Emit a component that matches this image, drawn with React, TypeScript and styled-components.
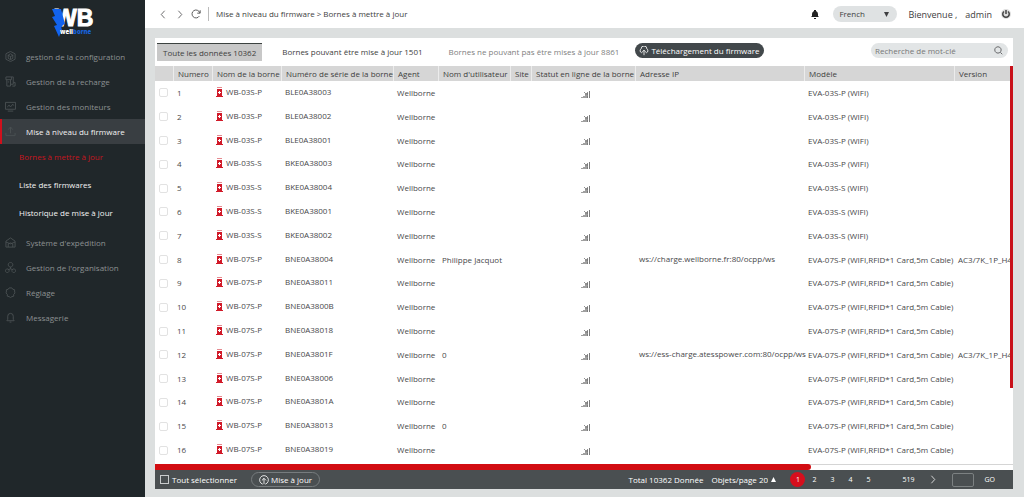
import React from "react";
import styled, { createGlobalStyle } from "styled-components";

const GlobalStyle = createGlobalStyle`
  * { box-sizing: border-box; }
  body { margin: 0; background: #dcdfdf; }
  body, button, input, select {
    font-family: "Open Sans", "Noto Sans", sans-serif;
    font-size: 8px;
    color: #3e3e40;
  }
  button { background: none; border: 0; padding: 0; cursor: pointer; }
  a { color: inherit; text-decoration: none; }
  svg { display: block; flex: none; }
`;

const Page = styled.div`
  display: grid;
  grid-template-columns: 145px minmax(0, 1fr);
  min-height: 100vh;
`;

const Sidebar = styled.nav`
  background: #20272a;
  color: #8d9192;
`;

const LogoBox = styled.div`
  height: 44px;
  padding: 8px 0 0 50px;
`;

const MenuLink = styled.a<{ $active?: boolean }>`
  display: flex;
  align-items: center;
  gap: 10px;
  height: 25px;
  padding: 0 0 1px 3px;
  border-left: 2px solid ${(p) => (p.$active ? "#d0101c" : "transparent")};
  background: ${(p) => (p.$active ? "#393e42" : "transparent")};
  color: ${(p) => (p.$active ? "#f4f4f4" : "inherit")};
  font-weight: ${(p) => (p.$active ? 500 : 400)};
  svg { color: #4a5153; }
`;

const SubMenu = styled.div`
  padding-bottom: 2px;
`;

const SubLink = styled.a<{ $active?: boolean }>`
  display: flex;
  align-items: center;
  height: 28px;
  padding: 0 0 3px 19px;
  color: ${(p) => (p.$active ? "#c5151f" : "#f4f4f4")};
  font-weight: 500;
`;

const Main = styled.main`
  display: flex;
  flex-direction: column;
  min-width: 0;
`;

const TopBar = styled.header`
  display: flex;
  align-items: center;
  height: 28px;
  padding: 0 13px 0 14px;
  background: #fff;
`;

const NavButtons = styled.div`
  display: flex;
  align-items: center;
  gap: 7px;
  height: 14px;
  padding-right: 7px;
  border-right: 1px solid #bbb;
  color: #6b6b6b;
`;

const Crumbs = styled.div`
  flex: 1;
  padding: 0 0 2px 7px;
`;

const TopActions = styled.div`
  display: flex;
  align-items: center;
`;

const LanguageBox = styled.label`
  display: flex;
  align-items: center;
  width: 64px;
  height: 16px;
  margin: 0 11px 0 14px;
  padding: 0 8px 0 6px;
  border-radius: 8px;
  background: #dfe2e3;
`;

const PlainSelect = styled.select<{ $light?: boolean; $grow?: boolean }>`
  flex: ${(p) => (p.$grow ? 1 : "none")};
  min-width: 0;
  appearance: none;
  border: 0;
  padding: 0 0 1px;
  background: transparent;
  color: ${(p) => (p.$light ? "#fff" : "#3e3e40")};
`;

const Welcome = styled.span`
  display: flex;
  gap: 8px;
  margin-right: 9px;
  font-size: 9px;
`;

const Panel = styled.section`
  display: flex;
  flex: 1;
  flex-direction: column;
  margin: 10px 11px 8px 10px;
  background: #fff;
`;

const Toolbar = styled.div`
  display: flex;
  align-items: flex-start;
  height: 28px;
  padding: 5px 5px 0 2px;
`;

const Tab = styled.button<{ $active?: boolean; $muted?: boolean }>`
  height: ${(p) => (p.$active ? 18 : 16)}px;
  padding: 0 6px;
  border-top: ${(p) => (p.$active ? "1px solid #3c4240" : "0")};
  background: ${(p) => (p.$active ? "#c8c8c8" : "none")};
  color: ${(p) => (p.$muted ? "#808080" : "#3e3e40")};
  white-space: nowrap;
`;

const TabList = styled.div`
  display: flex;
  flex: 1;
  gap: 14px;
`;

const UploadButton = styled.button`
  display: flex;
  align-items: center;
  gap: 2px;
  height: 15px;
  margin-left: -4px;
  padding: 0 4px;
  border-radius: 8px;
  background: #42484b;
  color: #fff;
  font-weight: 500;
  white-space: nowrap;
`;

const SearchBox = styled.label`
  display: flex;
  align-items: center;
  width: 137px;
  height: 15px;
  padding: 0 5px 0 4px;
  border-radius: 8px;
  background: #e2e5e6;
  input {
    flex: 1;
    min-width: 0;
    border: 0;
    padding: 0 0 1px;
    background: none;
    outline: 0;
  }
  input::placeholder { color: #777; }
`;

const TableArea = styled.div`
  display: flex;
  flex: 1;
`;

const TableClip = styled.div`
  display: flex;
  flex: 1;
  min-width: 0;
  padding-bottom: 2px;
  overflow: hidden;
`;

const DataTable = styled.table`
  width: 100%;
  table-layout: fixed;
  border-collapse: separate;
  border-spacing: 0;
  white-space: nowrap;
  th {
    height: 15px;
    padding: 0 0 1px 4px;
    border-left: 1px solid #ececec;
    background: #d6d6d6;
    font-weight: 400;
    text-align: left;
  }
  th:first-child { border-left: 0; }
`;

const Cell = styled.td<{ $center?: boolean; $raised?: boolean }>`
  padding: ${(p) => (p.$raised ? "0 0 2px 4px" : "0 0 0 4px")};
  text-align: ${(p) => (p.$center ? "center" : "left")};
  line-height: 12px;
  color: #48484a;
  svg { display: inline-block; vertical-align: middle; }
`;

const NameLine = styled.span`
  display: flex;
  align-items: center;
  gap: 3px;
`;

const Tick = styled.input<{ $dark?: boolean }>`
  display: block;
  appearance: none;
  width: 9px;
  height: 9px;
  margin: 0;
  border: 1px solid ${(p) => (p.$dark ? "#c9cccd" : "#e2e2e2")};
  border-radius: ${(p) => (p.$dark ? 0 : 2)}px;
`;

const VerticalTrack = styled.div`
  width: 3px;
`;

const VerticalThumb = styled.div`
  height: 81%;
  background: #c8101a;
`;

const HorizontalTrack = styled.div`
  height: 6px;
  border-top: 1px solid #d5d5d5;
  background: #fff;
`;

const HorizontalThumb = styled.div`
  width: calc(100% * 13 / 17);
  height: 6px;
  margin-top: -1px;
  border-radius: 0 3px 3px 0;
  background: #d20d12;
`;

const FooterBar = styled.footer`
  display: flex;
  align-items: center;
  justify-content: space-between;
  height: 19px;
  padding: 0 18px 0 5px;
  background: #4a4f51;
  color: #fff;
`;

const FooterGroup = styled.div<{ $gap: number }>`
  display: flex;
  align-items: center;
  gap: ${(p) => p.$gap}px;
`;

const CheckLabel = styled.label`
  display: flex;
  align-items: center;
  gap: 3px;
`;

const UpdateButton = styled.button`
  display: flex;
  align-items: center;
  gap: 2px;
  height: 15px;
  padding: 0 7px;
  border: 1px solid #777c7e;
  border-radius: 8px;
  color: #fff;
`;

const Pages = styled.div`
  display: flex;
  align-items: center;
  margin-left: 6px;
`;

const PageButton = styled.button<{ $width?: number; $current?: boolean }>`
  width: ${(p) => p.$width ?? 18}px;
  height: 15px;
  border-radius: 8px;
  background: ${(p) => (p.$current ? "#d60f1d" : "none")};
  color: #fff;
  font-size: 7px;
  svg { margin: 0 auto; }
`;

const Ellipsis = styled.span`
  width: 22px;
`;

const PageInput = styled.input`
  width: 22px;
  height: 14px;
  margin: 0 10px 0 5px;
  border: 1px solid #7c8182;
  border-radius: 2px;
  background: none;
  color: #fff;
`;

const GoButton = styled.button`
  color: #fff;
  font-size: 7px;
`;

const Line = ({ size = 12, d }: { size?: number; d: string }) => (
  <svg width={size} height={size} viewBox="0 0 24 24" fill="none" stroke="currentColor" strokeWidth="2" aria-hidden="true">
    <path d={d} />
  </svg>
);

const shapes = {
  cube: "M12 1l10 5v12l-10 5-10-5V6zM6 9l6 3 6-3M12 12v7M7 16V9l5-3 5 3v7l-5 3z",
  charge: "M2 2h16v12M2 2v6h12V2M4 8v14h8V8M12 18h6v-4h4v8h-6M6 13h3",
  monitor: "M1 3h22v15H1zM6 22h12M5 13l4-4 3 4 5-6 2 3",
  upgrade: "M12 2v14M7 8l5-6 5 6M2 15v6h20v-6",
  shipping: "M2 9l10-7 10 7v13H2zM2 11l10 4 10-4M7 22v-7l5-2 5 2v7",
  org: "M12 1a5 5 0 1 0 .1 0zM12 11v4M12 15l-6 2M12 15l6 2M5 15a4 4 0 1 0 .1 0zM19 15a4 4 0 1 0 .1 0z",
  gear: "M9 2h6l2 3 4 1v5l1 2-3 3v4l-4 1-3 2-3-2-4-1v-4l-3-3 1-2V6l4-1z",
  bell: "M4 19h16l-2-3V9q0-6-6-6T6 9v7zM10 22h4",
  back: "M15 2L6 12l9 10",
  forward: "M9 2l9 10-9 10",
  reload: "M20 17a9.500 9.500 0 1 1 1-8M22 3v7h-7",
  search: "M10.500 2a8.500 8.500 0 1 0 .1 0M17 17l5 5",
};

const Logo = () => (
  <svg width="50" height="30" viewBox="0 0 50 30" role="img" aria-label="WB wellborne">
    <text x="5" y="18" fill="#fff" stroke="#fff" fontFamily="Liberation Sans, sans-serif" fontWeight="700" fontSize="23">WB</text>
    <path d="M2 1h9l4 15-2 1-2 3 1 1-3 8-5-11 3-1-5-8 3-1z" fill="#1263ee" />
    <text x="10" y="26" fill="#fff" fontFamily="Open Sans, sans-serif" fontWeight="800" fontSize="6">
      well<tspan fill="#1761d8">borne</tspan>
    </text>
  </svg>
);

const Charger = () => (
  <svg width="7" height="10" viewBox="0 0 7 10" aria-hidden="true">
    <path d="M1 0h5v1H1z" fill="#e58a90" />
    <path d="M1 2h5v7H1zM0 9h7v1H0z" fill="#d11a29" />
    <path d="M3 4h1v1h1v1H4v1H3V6H2V5h1z" fill="#fff" />
  </svg>
);

const Signal = () => (
  <svg width="9" height="8" viewBox="0 0 9 8" fill="none" aria-hidden="true">
    <path d="M0 8V7h2V6h2V4h2V8z" fill="#a0a0a0" />
    <path d="M6.500 8V2M8.500 8V1" stroke="#7c7c7c" />
    <path d="M3 2l4 4M7 2L4 5" stroke="#909090" />
  </svg>
);

const UploadIcon = () => <Line size={10} d="M8 16H6a5 5 0 0 1-1-9 7 7 0 0 1 14 0 5 5 0 0 1-1 9h-2M12 22V10M8 14l4-4 4 4" />;
const CircleUp = () => <Line size={10} d="M9 22a10.500 10.500 0 1 1 6 0M12 22V8M7 13l5-5 5 5" />;

const Triangle = ({ up }: { up?: boolean }) => (
  <svg width="5" height="5" viewBox="0 0 5 5" fill="currentColor" aria-hidden="true">
    <path d={up ? "M0 5l2.500-5L5 5z" : "M0 0h5L2.500 5z"} />
  </svg>
);

const topMenu = [
  { icon: shapes.cube, text: "gestion de la configuration" },
  { icon: shapes.charge, text: "Gestion de la recharge" },
  { icon: shapes.monitor, text: "Gestion des moniteurs" },
  { icon: shapes.upgrade, text: "Mise à niveau du firmware", active: true },
];
const subMenu = ["Bornes à mettre à jour", "Liste des firmwares", "Historique de mise à jour"];
const bottomMenu = [
  { icon: shapes.shipping, text: "Système d'expédition" },
  { icon: shapes.org, text: "Gestion de l'organisation" },
  { icon: shapes.gear, text: "Réglage" },
  { icon: shapes.bell, text: "Messagerie" },
];

const columns = [
  { title: "", width: 18 },
  { title: "Numero", width: 39 },
  { title: "Nom de la borne", width: 69 },
  { title: "Numéro de série de la borne", width: 112 },
  { title: "Agent", width: 45 },
  { title: "Nom d'utilisateur", width: 72 },
  { title: "Site", width: 21 },
  { title: "Statut en ligne de la borne", width: 104 },
  { title: "Adresse IP", width: 169 },
  { title: "Modèle", width: 150 },
  { title: "Version" },
];

const longModel = "EVA-07S-P (WIFI,RFID*1 Card,5m Cable)";

type Row = { name: string; serial: string; model: string; user?: string; ip?: string; version?: string };

const rows: Row[] = [
  { name: "WB-03S-P", serial: "BLE0A38003", model: "EVA-03S-P (WIFI)" },
  { name: "WB-03S-P", serial: "BLE0A38002", model: "EVA-03S-P (WIFI)" },
  { name: "WB-03S-P", serial: "BLE0A38001", model: "EVA-03S-P (WIFI)" },
  { name: "WB-03S-S", serial: "BKE0A38003", model: "EVA-03S-P (WIFI)" },
  { name: "WB-03S-S", serial: "BKE0A38004", model: "EVA-03S-S (WIFI)" },
  { name: "WB-03S-S", serial: "BKE0A38001", model: "EVA-03S-S (WIFI)" },
  { name: "WB-03S-S", serial: "BKE0A38002", model: "EVA-03S-S (WIFI)" },
  { name: "WB-07S-P", serial: "BNE0A38004", model: longModel, user: "Philippe Jacquot", ip: "ws://charge.wellborne.fr:80/ocpp/ws", version: "AC3/7K_1P_H4" },
  { name: "WB-07S-P", serial: "BNE0A38011", model: longModel },
  { name: "WB-07S-P", serial: "BNE0A3800B", model: longModel },
  { name: "WB-07S-P", serial: "BNE0A38018", model: longModel },
  { name: "WB-07S-P", serial: "BNE0A3801F", model: longModel, user: "0", ip: "ws://ess-charge.atesspower.com:80/ocpp/ws", version: "AC3/7K_1P_H4" },
  { name: "WB-07S-P", serial: "BNE0A38006", model: longModel },
  { name: "WB-07S-P", serial: "BNE0A3801A", model: longModel },
  { name: "WB-07S-P", serial: "BNE0A38013", model: longModel, user: "0" },
  { name: "WB-07S-P", serial: "BNE0A38019", model: longModel },
];

export default function App() {
  return (
    <Page>
      <GlobalStyle />
      <Sidebar>
        <LogoBox><Logo /></LogoBox>
        {topMenu.map((m) => (
          <MenuLink key={m.text} href="#" $active={m.active}><Line size={11} d={m.icon} />{m.text}</MenuLink>
        ))}
        <SubMenu>
          {subMenu.map((text, i) => <SubLink key={text} href="#" $active={i === 0}>{text}</SubLink>)}
        </SubMenu>
        {bottomMenu.map((m) => (
          <MenuLink key={m.text} href="#"><Line size={11} d={m.icon} />{m.text}</MenuLink>
        ))}
      </Sidebar>
      <Main>
        <TopBar>
          <NavButtons>
            <button aria-label="Précédent"><Line size={9} d={shapes.back} /></button>
            <button aria-label="Suivant"><Line size={9} d={shapes.forward} /></button>
            <button aria-label="Actualiser"><Line size={10} d={shapes.reload} /></button>
          </NavButtons>
          <Crumbs>Mise à niveau du firmware &gt; Bornes à mettre à jour</Crumbs>
          <TopActions>
            <button aria-label="Notifications">
              <svg width="8" height="9" viewBox="0 0 8 9" fill="#222">
                <path d="M3 0h2v1q2 1 2 3v2l1 1H0l1-1V4q0-2 2-3zM3 8h2v1H3z" />
              </svg>
            </button>
            <LanguageBox>
              <PlainSelect $grow aria-label="Langue"><option>French</option></PlainSelect>
              <Triangle />
            </LanguageBox>
            <Welcome><span>Bienvenue ,</span><span>admin</span></Welcome>
            <button aria-label="Déconnexion">
              <svg width="10" height="10" viewBox="0 0 20 20" fill="none" stroke="#444" strokeWidth="3">
                <circle cx="10" cy="10" r="10" fill="#ddd" stroke="none" />
                <path d="M6 5a6.500 6.500 0 1 0 8 0M10 2v8" />
              </svg>
            </button>
          </TopActions>
        </TopBar>
        <Panel>
          <Toolbar>
            <TabList>
              <Tab $active>Toute les données 10362</Tab>
              <Tab>Bornes pouvant être mise à jour 1501</Tab>
              <Tab $muted>Bornes ne pouvant pas être mises à jour 8861</Tab>
              <UploadButton><UploadIcon />Téléchargement du firmware</UploadButton>
            </TabList>
            <SearchBox>
              <input type="search" aria-label="Recherche" placeholder="Recherche de mot-clé" />
              <Line size={9} d={shapes.search} />
            </SearchBox>
          </Toolbar>
          <TableArea>
            <TableClip>
              <DataTable>
                <colgroup>
                  {columns.map((c) => <col key={c.title} width={c.width} />)}
                </colgroup>
                <thead>
                  <tr>{columns.map((c) => <th key={c.title} scope="col">{c.title}</th>)}</tr>
                </thead>
                <tbody>
                  {rows.map((r, i) => (
                    <tr key={r.serial}>
                      <Cell><Tick type="checkbox" aria-label={`Sélectionner ${r.serial}`} /></Cell>
                      <Cell>{i + 1}</Cell>
                      <Cell $raised><NameLine><Charger />{r.name}</NameLine></Cell>
                      <Cell $raised>{r.serial}</Cell>
                      <Cell>Wellborne</Cell>
                      <Cell>{r.user}</Cell>
                      <Cell />
                      <Cell $center><Signal /></Cell>
                      <Cell $raised>{r.ip}</Cell>
                      <Cell>{r.model}</Cell>
                      <Cell>{r.version}</Cell>
                    </tr>
                  ))}
                </tbody>
              </DataTable>
            </TableClip>
            <VerticalTrack><VerticalThumb /></VerticalTrack>
          </TableArea>
          <HorizontalTrack><HorizontalThumb /></HorizontalTrack>
          <FooterBar>
            <FooterGroup $gap={14}>
              <CheckLabel><Tick $dark type="checkbox" />Tout sélectionner</CheckLabel>
              <UpdateButton><CircleUp />Mise à jour</UpdateButton>
            </FooterGroup>
            <FooterGroup $gap={8}>
              <span>Total 10362 Donnée</span>
              <CheckLabel>
                <PlainSelect $light aria-label="Objets par page"><option>Objets/page 20</option></PlainSelect>
                <Triangle up />
              </CheckLabel>
              <Pages>
                <PageButton $current $width={15}>1</PageButton>
                {[2, 3, 4, 5].map((n) => <PageButton key={n}>{n}</PageButton>)}
                <Ellipsis />
                <PageButton>519</PageButton>
                <PageButton $width={30} aria-label="Page suivante"><Line size={9} d={shapes.forward} /></PageButton>
                <PageInput aria-label="Numéro de page" />
                <GoButton>GO</GoButton>
              </Pages>
            </FooterGroup>
          </FooterBar>
        </Panel>
      </Main>
    </Page>
  );
}
